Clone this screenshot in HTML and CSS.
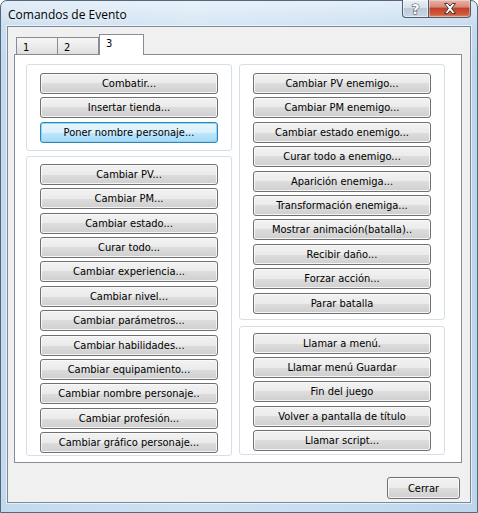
FILE: index.html
```html
<!DOCTYPE html>
<html lang="es">
<head>
<meta charset="utf-8">
<title>Comandos de Evento</title>
<link rel="stylesheet" href="styles.css">
</head>
<body>
<div class="window">
  <div class="titlebar">
    <span class="title">Comandos de Evento</span>
    <div class="caption">
      <div class="cbtn help"><span>?</span></div>
      <div class="cbtn close">
        <svg width="16" height="11" viewBox="0 0 16 11"><path d="M2.5 0.5h3.2l2.3 2.6 2.3-2.6h3.2l-3.9 4.9 3.9 5.1h-3.2l-2.3-2.8-2.3 2.8h-3.2l3.9-5.1z" fill="#fff" stroke="#3a3a3a" stroke-width="1" stroke-linejoin="round"/></svg>
      </div>
    </div>
  </div>
  <div class="client">
    <div class="tabctl">
      <div class="tabs">
        <div class="tab t1">1</div>
        <div class="tab t2">2</div>
        <div class="tab active">3</div>
      </div>
      <div class="panel">
        <div class="col">
          <div class="group g-l1">
            <button class="btn">Combatir...</button>
            <button class="btn">Insertar tienda...</button>
            <button class="btn focus">Poner nombre personaje...</button>
          </div>
          <div class="group g-l2">
            <button class="btn">Cambiar PV...</button>
            <button class="btn">Cambiar PM...</button>
            <button class="btn">Cambiar estado...</button>
            <button class="btn">Curar todo...</button>
            <button class="btn">Cambiar experiencia...</button>
            <button class="btn">Cambiar nivel...</button>
            <button class="btn">Cambiar parámetros...</button>
            <button class="btn">Cambiar habilidades...</button>
            <button class="btn">Cambiar equipamiento...</button>
            <button class="btn">Cambiar nombre personaje..</button>
            <button class="btn">Cambiar profesión...</button>
            <button class="btn">Cambiar gráfico personaje...</button>
          </div>
        </div>
        <div class="col col-r">
          <div class="group g-r1">
            <button class="btn">Cambiar PV enemigo...</button>
            <button class="btn">Cambiar PM enemigo...</button>
            <button class="btn">Cambiar estado enemigo...</button>
            <button class="btn">Curar todo a enemigo...</button>
            <button class="btn">Aparición enemiga...</button>
            <button class="btn">Transformación enemiga...</button>
            <button class="btn">Mostrar animación(batalla)..</button>
            <button class="btn">Recibir daño...</button>
            <button class="btn">Forzar acción...</button>
            <button class="btn">Parar batalla</button>
          </div>
          <div class="group g-r2">
            <button class="btn">Llamar a menú.</button>
            <button class="btn">Llamar menú Guardar</button>
            <button class="btn">Fin del juego</button>
            <button class="btn">Volver a pantalla de título</button>
            <button class="btn">Llamar script...</button>
          </div>
        </div>
      </div>
    </div>
    <div class="footer">
      <button class="btn close-btn">Cerrar</button>
    </div>
  </div>
</div>
</body>
</html>
```
FILE: styles.css
```css
* { box-sizing: border-box; }
html, body { margin: 0; padding: 0; background: #fff; }
body { width: 478px; height: 513px; overflow: hidden; }

.window {
  width: 478px;
  height: 513px;
  border: 1px solid #55677a;
  border-radius: 7px 7px 0 0;
  background:
    linear-gradient(to bottom, rgba(255,255,255,0.55) 0, rgba(255,255,255,0.15) 26px, rgba(255,255,255,0) 60px),
    linear-gradient(to right, #c2d9ee 0, #cfe2f3 40%, #c7ddf1 70%, #bcd5ec 100%);
  padding: 0 6px 8px 6px;
  display: flex;
  flex-direction: column;
}

.titlebar {
  height: 26px;
  display: flex;
  justify-content: space-between;
  align-items: flex-start;
  margin-top: -1px;
}
.title {
  font-family: "Open Sans", "Noto Sans", sans-serif;
  font-size: 12px;
  color: #000;
  margin: 7px 0 0 1px;
  line-height: 16px;
  text-shadow: 0 0 6px rgba(255,255,255,0.9);
}
.caption { display: flex; margin-right: 0; }
.cbtn {
  height: 18px;
  border: 1px solid #4f5d6b;
  border-top: none;
  display: flex;
  align-items: center;
  justify-content: center;
}
.help {
  width: 26px;
  border-radius: 0 0 0 4px;
  border-right: none;
  background: linear-gradient(to bottom, #e9eff5 0, #d8e2ec 45%, #bccbd9 50%, #c9d6e2 100%);
  box-shadow: inset 0 0 0 1px rgba(255,255,255,0.55);
}
.help span {
  font-family: "DejaVu Sans", sans-serif;
  font-weight: bold;
  font-size: 14px;
  line-height: 14px;
  color: #fff;
  -webkit-text-stroke: 1px #4a4a4a;
  paint-order: stroke fill;
}
.close {
  width: 43px;
  border-radius: 0 0 4px 0;
  background: linear-gradient(to bottom, #e8b3a8 0, #d98a79 40%, #c4402b 50%, #d05a3c 85%, #e0926e 100%);
  box-shadow: inset 0 0 0 1px rgba(255,255,255,0.35);
}
.close svg { display: block; }

.client {
  width: 464px;
  height: 477px;
  border: 1px solid #7a8897;
  background: #f0f0f0;
  box-shadow: 0 0 0 1px rgba(255,255,255,0.6);
  display: flex;
  flex-direction: column;
}

.tabctl {
  margin: 7px 0 0 6px;
  width: 448px;
}
.tabs {
  display: flex;
  align-items: flex-end;
  height: 20px;
  padding-left: 2px;
}
.tab {
  font-family: "DejaVu Sans Condensed", "DejaVu Sans", sans-serif;
  font-size: 11px;
  color: #000;
  height: 17px;
  border: 1px solid #898c95;
  border-bottom: none;
  background: linear-gradient(to bottom, #f6f6f6 0, #ececec 50%, #dedede 100%);
  padding: 3px 0 0 6px;
  line-height: 13px;
}
.t1 { width: 42px; }
.t2 { width: 41px; border-left: none; }
.tab.active {
  width: 45px;
  height: 21px;
  margin-bottom: -1px;
  background: #fff;
  position: relative;
  z-index: 1;
  padding: 2px 0 0 6px;
  margin-left: 0;
}

.panel {
  height: 409px;
  border: 1px solid #898c95;
  background: #fff;
  display: flex;
  gap: 7px;
  padding: 9px 0 0 11px;
}
.col {
  width: 206px;
  display: flex;
  flex-direction: column;
  gap: 5px;
}
.col-r { gap: 6px; }

.group {
  border: 1px solid #d5dfe5;
  border-radius: 3px;
  display: flex;
  flex-direction: column;
  gap: 3.4px;
  padding: 0 13px;
}
.g-l1 { padding-top: 8px; padding-bottom: 7px; }
.g-l2 { padding-top: 7px; padding-bottom: 2px; }
.g-r1 { padding-top: 8px; padding-bottom: 5px; }
.g-r2 { padding-top: 6px; padding-bottom: 3px; }

.btn {
  display: block;
  width: 178px;
  height: 21px;
  margin: 0;
  padding: 0;
  border: 1px solid #707070;
  border-radius: 3px;
  background: linear-gradient(to bottom, #f2f2f2 0, #ebebeb 50%, #dddddd 50%, #cfcfcf 100%);
  box-shadow: inset 0 0 0 1px rgba(252,252,252,0.85);
  font-family: "DejaVu Sans Condensed", "DejaVu Sans", sans-serif;
  font-size: 11px;
  line-height: 17px;
  color: #000;
  text-align: center;
  white-space: nowrap;
}
.btn.focus {
  border-color: #3c7fb1;
  background: linear-gradient(to bottom, #eaf6fd 0, #d9f0fc 50%, #bee6fd 50%, #a7d9f5 100%);
  box-shadow: inset 0 0 0 1px rgba(120, 220, 250, 0.9);
}

.footer {
  display: flex;
  justify-content: flex-end;
  padding: 14px 10px 0 0;
}
.close-btn {
  width: 73px;
  height: 22px;
}
```
